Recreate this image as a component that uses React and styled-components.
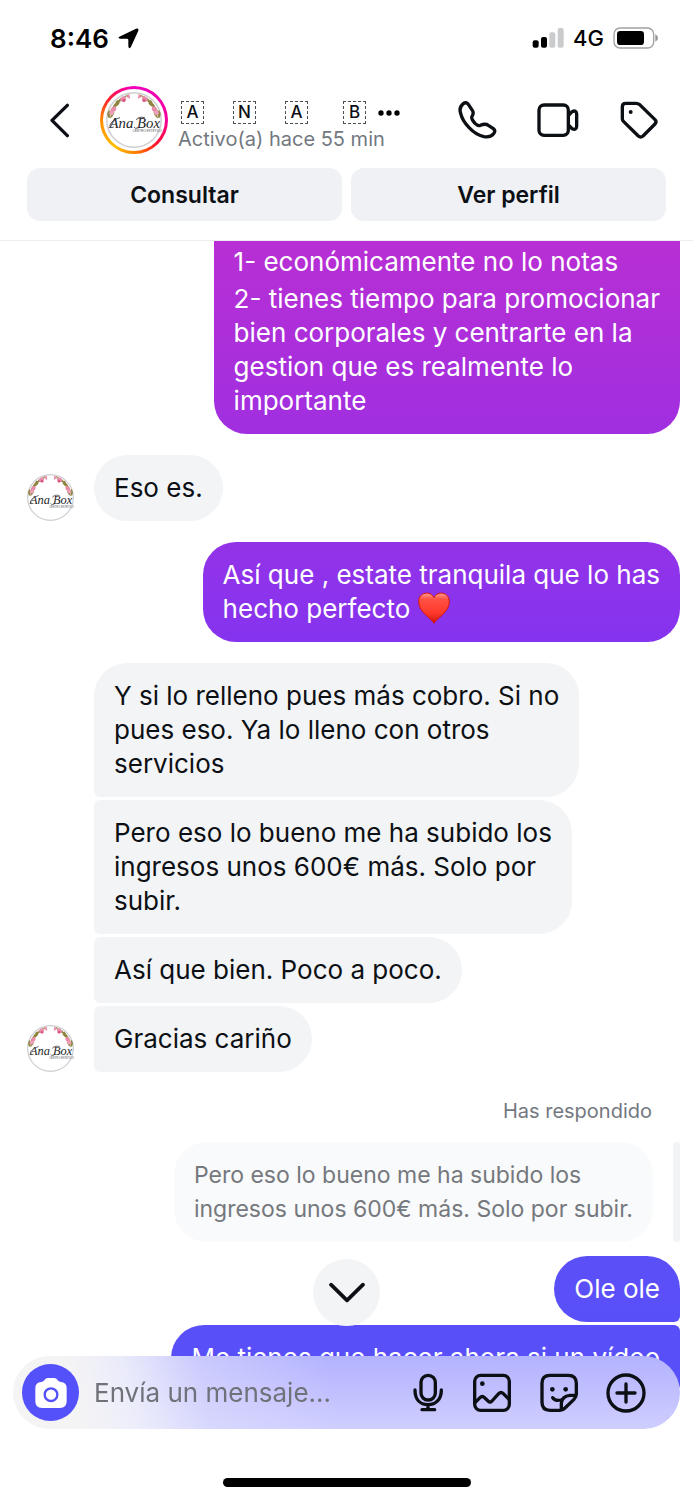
import React from 'react'

import styled, { createGlobalStyle, css } from 'styled-components'

const GlobalStyle = createGlobalStyle`
  * {
    box-sizing: border-box;
  }

  body {
    margin: 0;
    background: #fff;
    color: #0c1014;
    font-family: Inter, "Liberation Sans", sans-serif;
  }
`;

const Screen = styled.div`
  display: flex;
  flex-direction: column;
  height: 100vh;
  overflow: hidden;
`;

const StatusBar = styled.div`
  display: flex;
  flex: none;
  align-items: center;
  justify-content: space-between;
  height: 76px;
  padding: 0 35px 0 50px;
  color: #000;
`;

const StatusGroup = styled.div`
  display: flex;
  align-items: center;
  gap: 9px;
`;

const Time = styled.span`
  font-size: 26px;
  font-weight: 600;
`;

const Network = styled.span`
  font-size: 22px;
  font-weight: 500;
`;

const Header = styled.header`
  flex: none;
  border-bottom: 1px solid #ededef;
`;

const HeaderRow = styled.div`
  display: flex;
  align-items: center;
  height: 88px;
  padding: 0 33px 0 44px;
`;

const IconButton = styled.button`
  display: flex;
  flex: none;
  align-items: center;
  justify-content: center;
  padding: 0;
  border: 0;
  background: none;
  color: inherit;
`;

const StoryLink = styled.a`
  display: flex;
  flex: none;
  align-items: center;
  justify-content: center;
  width: 68px;
  height: 68px;
  margin: 0 10px 0 24px;
  border: 3px solid transparent;
  border-radius: 50%;
  background:
    linear-gradient(#fff, #fff) padding-box,
    conic-gradient(#f000c0, #f4009c 90deg, #ff1030 135deg, #ff7a00 175deg, #ffc000 215deg, #ff8a00 270deg, #ff2030 310deg, #f6009c 345deg, #f000c0) border-box;
`;

const Contact = styled.div`
  display: flex;
  flex: 1;
  flex-direction: column;
  gap: 2px;
  min-width: 0;
  padding-top: 13px;
`;

const Name = styled.h1`
  display: flex;
  align-items: center;
  gap: 35px;
  margin: 0;
  padding-left: 3px;
  font-size: 17px;
  font-weight: 500;
  line-height: 22px;
`;

const Word = styled.span`
  display: flex;
  gap: 29px;
`;

const Letter = styled.span`
  width: 23px;
  height: 23px;
  border: 1px dashed #4b4e52;
  line-height: 20px;
  text-align: center;
`;

const LastWord = styled(Word)`
  align-items: center;
  gap: 12px;
`;

const Activity = styled.p`
  margin: 0;
  color: #737880;
  font-size: 20px;
  line-height: 26px;
  white-space: nowrap;
`;

const HeaderActions = styled.div`
  display: flex;
  gap: 39px;
`;

const Shortcuts = styled.div`
  display: flex;
  gap: 9px;
  padding: 4px 27px 19px;
`;

const Shortcut = styled.button`
  flex: 1;
  height: 53px;
  padding: 0;
  border: 0;
  border-radius: 13px;
  background: #f0f1f5;
  color: #0c1014;
  font-family: inherit;
  font-size: 23px;
  font-weight: 600;
`;

const Chat = styled.main`
  display: flex;
  flex: 1;
  flex-direction: column;
  gap: 21px;
  min-height: 0;
  padding: 0 13px 0 27px;
  overflow: hidden;
`;

const Group = styled.section`
  display: flex;
  flex: none;
  flex-direction: column;
  align-items: ${props => props.$sent ? 'flex-end' : 'flex-start'};
  gap: 3px;
`;

const Received = styled.div`
  display: flex;
  align-items: flex-end;
  gap: 20px;
`;

const AvatarSlot = styled.div`
  display: flex;
  flex: none;
  width: 47px;
`;

const corners = {
  single: '33px',
  top: '33px 33px 33px 6px',
  middle: '6px 33px 33px 6px',
  sentFirst: '33px 33px 6px 33px',
  sentNext: '33px 6px 6px 33px',
  cut: '0 0 33px 33px',
};

const Bubble = styled.div`
  display: flex;
  flex-direction: column;
  gap: 3px;
  padding: 16px 20px;
  border-radius: ${props => corners[props.$shape || 'single']};
  background: #f3f4f6;
  font-size: 26px;
  line-height: 34px;
  white-space: pre;

  ${props => props.$sent && css`
    background: linear-gradient(#c42bc9, #b82fd4 16%, #a02fe0 29%, #9333e8 36%, #8533ef 43%, #5b4ff8 84%, #5450fa) fixed;
    color: #fff;
  `}

  ${props => props.$shape === 'cut' && css`
    padding-top: 4px;
  `}
`;

const Paragraph = styled.p`
  margin: 0;
`;

const ReplyLabel = styled.p`
  margin: 6px 28px 16px 0;
  color: #737880;
  font-size: 20px;
  line-height: 24px;
`;

const Quote = styled.div`
  display: flex;
  gap: 20px;
  margin-bottom: 11px;
`;

const QuoteText = styled.blockquote`
  margin: 0;
  padding: 16px 20px;
  border-radius: 33px;
  background: #f9fafb;
  color: #75787d;
  font-size: 23px;
  line-height: 34px;
  white-space: pre;
`;

const QuoteBar = styled.div`
  width: 7px;
  border-radius: 3px;
  background: #f3f4f6;
`;

const Footer = styled.footer`
  position: fixed;
  right: 0;
  bottom: 0;
  left: 0;
  display: flex;
  flex-direction: column;
  align-items: center;
  padding-bottom: 13px;
`;

const ScrollDown = styled(IconButton)`
  width: 67px;
  height: 67px;
  margin-bottom: 30px;
  border-radius: 50%;
  background: #f3f4f6;
`;

const Composer = styled.form`
  display: flex;
  align-items: center;
  align-self: stretch;
  height: 73px;
  margin: 0 13px 49px;
  padding: 0 33px 0 9px;
  border-radius: 37px;
  background:
    linear-gradient(80deg, #f4f4f5 10%, rgba(243, 244, 250, 0.85) 18%, rgba(225, 225, 252, 0.5) 29%, transparent 48%),
    linear-gradient(#b3b2ff, #cfceff);
`;

const CameraButton = styled(IconButton)`
  width: 57px;
  height: 57px;
  border-radius: 50%;
  background: #5450fa;
`;

const MessageInput = styled.input`
  flex: 1;
  min-width: 0;
  margin: 0 15px;
  padding: 0;
  border: 0;
  outline: 0;
  background: none;
  color: #0c1014;
  font-family: inherit;
  font-size: 26px;

  &::placeholder {
    color: #6f7379;
    opacity: 1;
  }
`;

const ComposerActions = styled.div`
  display: flex;
  gap: 25px;
`;

const HomeIndicator = styled.div`
  width: 248px;
  height: 9px;
  border-radius: 5px;
  background: #000;
`;

const HeartIcon = styled.svg`
  width: 32px;
  height: 32px;
  vertical-align: -6px;
`;

const Icon = ({box, width = 42, height = 42, children}) => (
  <svg
    width={width}
    height={height}
    viewBox={box}
    fill="none"
    stroke="currentColor"
    strokeWidth="10"
    strokeLinecap="round"
    strokeLinejoin="round"
    aria-hidden="true"
  >
    {children}
  </svg>
)

const Sprig = () => (
  <>
    <path d="M3 28C6 18 13 9 27 2" stroke="#a59a55" strokeWidth="2" fill="none" />
    <path d="M2 31q-3-6 1-10q4 5 1 10zM8 18q1-7 9-8q-1 7-9 8zM14 10q4-7 11-4q-3 5-11 4zM4 32q5-3 6-8q-7 1-6 8zM11 16q-1-5 3-8q3 5-3 8z" fill="#8f8540" />
    <path d="M5 21q2-6 7-4q1 6-4 7zM17 9q1-6 6-6q4 5-1 8zM25 4l4-4 1 7z" fill="#ea8bab" />
    <circle cx="6" cy="25" r="3" fill="#ef9fba" />
    <circle cx="22" cy="9" r="2" fill="#d9547f" />
  </>
)

const Avatar = ({size}) => (
  <svg width={size} height={size} viewBox="0 0 72 72" role="img" aria-label="Ana Box">
    <circle cx="36" cy="36" r="35" fill="#fff" stroke="#cfd0d4" strokeWidth="2" />
    <g transform="translate(1 2)"><Sprig /></g>
    <g transform="translate(71 2) scale(-1 1)"><Sprig /></g>
    <text x="37" y="46" textAnchor="middle" fontFamily="'Liberation Serif', serif" fontStyle="italic" fontSize="19" fill="#25262a">Ana Box</text>
    <path d="M10 45Q5 47 5 43Q7 36 18 33M42 46Q37 48 36 45M39 36Q41 31 50 33" stroke="#25262a" strokeWidth="1" fill="none" />
    <text x="53" y="52" textAnchor="middle" fontFamily="'Liberation Sans', sans-serif" fontSize="4" fill="#55565a">CENTRO ESTÉTICO</text>
  </svg>
)

const Heart = () => (
  <HeartIcon viewBox="0 0 96 96" role="img" aria-label="❤️">
    <defs>
      <linearGradient id="heart" x1="0" y1="0" x2="0" y2="1">
        <stop offset="0" stopColor="#ff9c8c" />
        <stop offset="0.2" stopColor="#ff5244" />
        <stop offset="0.65" stopColor="#fd3a2c" />
        <stop offset="1" stopColor="#cf1509" />
      </linearGradient>
    </defs>
    <path d="M48 94C41 78 2 62 2 29C2 0 38-5 48 17C58-5 94 0 94 29C94 62 55 78 48 94Z" fill="url(#heart)" stroke="#d3150d" strokeWidth="3" />
  </HeartIcon>
)

const App = () => {
  return (
    <>
      <GlobalStyle />
      <Screen>
        <StatusBar>
          <StatusGroup>
            <Time>8:46</Time>
            <svg width="21" height="21" viewBox="-1 -1 63 63" aria-hidden="true">
              <path d="M3 25L53 1Q62-2 60 7L38 55Q32 65 30 54V35Q30 31 26 31H6Q-4 30 3 25Z" />
            </svg>
          </StatusGroup>
          <StatusGroup>
            <svg width="32" height="20" viewBox="0 0 96 60" aria-hidden="true">
              <rect x="2" y="37" width="18" height="22" rx="6" />
              <rect x="27" y="27" width="18" height="32" rx="6" />
              <rect x="52" y="13" width="18" height="46" rx="6" fill="#cacbcd" />
              <rect x="77" y="0" width="18" height="59" rx="6" fill="#cacbcd" />
            </svg>
            <Network>4G</Network>
            <svg width="45" height="22" viewBox="0 0 135 66" aria-hidden="true">
              <rect x="3" y="3" width="119" height="60" rx="18" fill="none" stroke="#a0a1a4" strokeWidth="4" />
              <rect x="12" y="12" width="81" height="42" rx="10" />
              <path d="M127 22q8 4 8 11t-8 11z" fill="#96979a" />
            </svg>
          </StatusGroup>
        </StatusBar>

        <Header>
          <HeaderRow>
            <IconButton type="button" aria-label="Atrás">
              <Icon box="132 306 96 108" width={32} height={36}>
                <path d="M202 316L156 361L202 407" />
              </Icon>
            </IconButton>
            <StoryLink href="#perfil">
              <Avatar size={56} />
            </StoryLink>
            <Contact>
              <Name>
                <Word>
                  <Letter>A</Letter>
                  <Letter>N</Letter>
                  <Letter>A</Letter>
                </Word>
                <LastWord>
                  <Letter>B</Letter>
                  <svg width="22" height="6" viewBox="0 0 66 18" aria-hidden="true">
                    <circle cx="9" cy="9" r="8" />
                    <circle cx="33" cy="9" r="8" />
                    <circle cx="57" cy="9" r="8" />
                  </svg>
                </LastWord>
              </Name>
              <Activity>Activo(a) hace 55 min</Activity>
            </Contact>
            <HeaderActions>
              <IconButton type="button" aria-label="Llamar">
                <Icon box="168 298 126 126">
                  <path d="M190 312C180 320 178 330 182 341C188 368 220 405 252 411C266 413 275 411 281 402C285 397 285 391 280 387L265 377C258 372 248 374 241 377C236 379 231 377 225 371C218 363 213 355 216 350C220 344 221 338 217 332L205 314C201 308 195 308 190 312Z" />
                </Icon>
              </IconButton>
              <IconButton type="button" aria-label="Videollamada">
                <Icon box="410 298 126 126">
                  <rect x="416" y="316" width="88" height="91" rx="15" />
                  <path d="M505 347L515 336Q528 330 529 343V380Q528 393 515 387L505 376" />
                </Icon>
              </IconButton>
              <IconButton type="button" aria-label="Etiqueta">
                <Icon box="652 298 126 126">
                  <path d="M675 311H706Q712 311 717 315L763 360Q769 366 763 373L727 409Q720 415 713 409L669 366Q665 362 665 357V321Q665 311 675 311Z" />
                  <circle cx="690" cy="337" r="6" fill="currentColor" stroke="none" />
                </Icon>
              </IconButton>
            </HeaderActions>
          </HeaderRow>
          <Shortcuts>
            <Shortcut type="button">Consultar</Shortcut>
            <Shortcut type="button">Ver perfil</Shortcut>
          </Shortcuts>
        </Header>

        <Chat>
          <Group $sent>
            <Bubble $sent $shape="cut">
              <Paragraph>1- económicamente no lo notas</Paragraph>
              <Paragraph>{'2- tienes tiempo para promocionar\nbien corporales y centrarte en la\ngestion que es realmente lo\nimportante'}</Paragraph>
            </Bubble>
          </Group>

          <Group>
            <Received>
              <AvatarSlot><Avatar size={47} /></AvatarSlot>
              <Bubble>Eso es.</Bubble>
            </Received>
          </Group>

          <Group $sent>
            <Bubble $sent>
              <Paragraph>{'Así que , estate tranquila que lo has\nhecho perfecto '}<Heart /></Paragraph>
            </Bubble>
          </Group>

          <Group>
            <Received>
              <AvatarSlot />
              <Bubble $shape="top">{'Y si lo relleno pues más cobro. Si no\npues eso. Ya lo lleno con otros\nservicios'}</Bubble>
            </Received>
            <Received>
              <AvatarSlot />
              <Bubble $shape="middle">{'Pero eso lo bueno me ha subido los\ningresos unos 600€ más. Solo por\nsubir.'}</Bubble>
            </Received>
            <Received>
              <AvatarSlot />
              <Bubble $shape="middle">Así que bien. Poco a poco.</Bubble>
            </Received>
            <Received>
              <AvatarSlot><Avatar size={47} /></AvatarSlot>
              <Bubble $shape="middle">Gracias cariño</Bubble>
            </Received>
          </Group>

          <Group $sent>
            <ReplyLabel>Has respondido</ReplyLabel>
            <Quote>
              <QuoteText>{'Pero eso lo bueno me ha subido los\ningresos unos 600€ más. Solo por subir.'}</QuoteText>
              <QuoteBar />
            </Quote>
            <Bubble $sent $shape="sentFirst">Ole ole</Bubble>
            <Bubble $sent $shape="sentNext">Me tienes que hacer ahora si un vídeo</Bubble>
          </Group>
        </Chat>
      </Screen>

      <Footer>
        <ScrollDown type="button" aria-label="Ir al final">
          <Icon box="0 0 108 72" width={36} height={24}>
            <path d="M6 11L54 58L102 11" strokeWidth="11" />
          </Icon>
        </ScrollDown>
        <Composer>
          <CameraButton type="button" aria-label="Cámara">
            <svg width="32" height="32" viewBox="103 405 96 96" aria-hidden="true">
              <path d="M122 420Q129 419 132 413Q135 408 141 408H161Q167 408 170 413Q173 419 180 420Q198 421 198 438V478Q198 498 178 498H124Q104 498 104 478V438Q104 421 122 420Z" fill="#fff" />
              <circle cx="151" cy="458" r="19" fill="none" stroke="#5450fa" strokeWidth="7" />
            </svg>
          </CameraButton>
          <MessageInput type="text" placeholder="Envía un mensaje..." aria-label="Envía un mensaje" />
          <ComposerActions>
            <IconButton type="button" aria-label="Nota de voz">
              <Icon box="211 396 108 126" width={36}>
                <rect x="244" y="406" width="43" height="74" rx="21" />
                <path d="M226 450C226 479 242 494 265 494S305 479 305 450M265 494V509M247 509H285" />
              </Icon>
            </IconButton>
            <IconButton type="button" aria-label="Galería">
              <Icon box="394 396 126 126">
                <rect x="405" y="406" width="104" height="105" rx="18" />
                <path d="M406 488L421 473Q427 467 433 472L446 484Q451 489 457 483L477 461Q484 454 491 461L509 479" />
                <circle cx="428" cy="431" r="7" fill="currentColor" stroke="none" />
              </Icon>
            </IconButton>
            <IconButton type="button" aria-label="Sticker">
              <Icon box="594 396 126 126">
                <path d="M709 462V430Q709 406 685 406H630Q606 406 606 430V487Q606 511 630 511H660Q668 511 675 504L702 478Q709 471 709 462ZM664 509V490Q666 468 690 466H707M638 473Q646 484 663 480" />
                <circle cx="637" cy="448" r="7" fill="currentColor" stroke="none" />
                <circle cx="677" cy="448" r="7" fill="currentColor" stroke="none" />
              </Icon>
            </IconButton>
            <IconButton type="button" aria-label="Más opciones">
              <Icon box="795 396 126 126">
                <circle cx="858" cy="459" r="54" />
                <path d="M831 459H885M858 432V486" />
              </Icon>
            </IconButton>
          </ComposerActions>
        </Composer>
        <HomeIndicator />
      </Footer>
    </>
  )
}

export default App
